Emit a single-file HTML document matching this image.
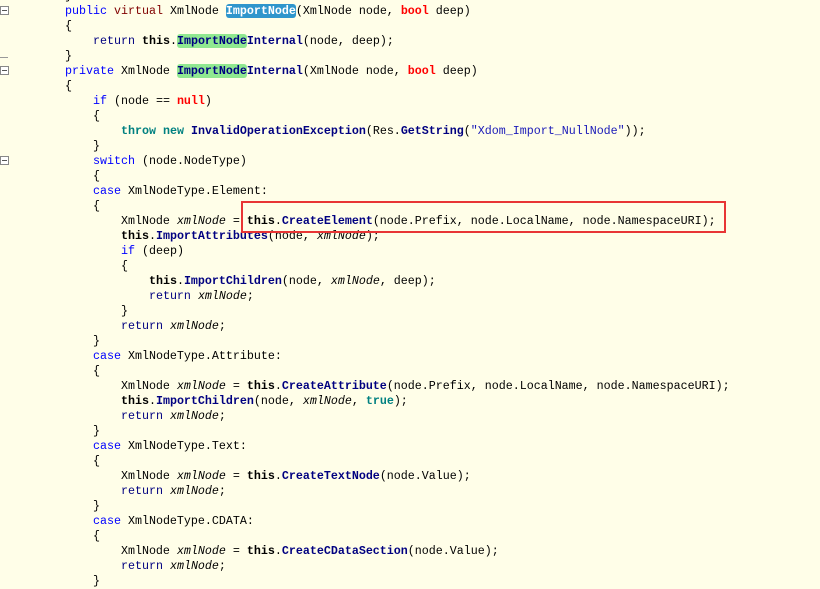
<!DOCTYPE html>
<html><head><meta charset="utf-8"><style>
html,body{margin:0;padding:0}
body{width:820px;height:582px;overflow:hidden;background:#fffee8;position:relative;font-family:"Liberation Mono","DejaVu Sans Mono",monospace;font-size:11.67px;color:#000}
#code{position:absolute;left:65px;top:-11.5px;white-space:pre;line-height:15px}
.k{color:#0000ff}.v{color:#800000}.r{color:#ff0000;font-weight:bold}.n{color:#000080}
.t{font-weight:bold}.m{color:#000080;font-weight:bold}.th{color:#008080;font-weight:bold}
.s{color:#1a1ab8}
.hb{background:#2f96cc;color:#fff;border-radius:3px;font-weight:bold}
.hg{background:#90e890;color:#000080;border-radius:3px;font-weight:bold}
.fold{position:absolute;left:0;width:7px;height:7px;border:1px solid #888;background:#fff}
.fold:after{content:"";position:absolute;left:1px;top:3px;width:5px;height:1px;background:#555}
#box{position:absolute;left:241px;top:201px;width:481px;height:28px;border:2px solid #e83535}
</style></head><body>
<div class="fold" style="top:6px"></div>
<div style="position:absolute;left:0;top:57px;width:8px;height:1px;background:#999"></div>
<div class="fold" style="top:66px"></div>
<div class="fold" style="top:156px"></div>
<div id="code">}
<span class="k">public</span> <span class="v">virtual</span> XmlNode <span class="hb">ImportNode</span>(XmlNode node, <span class="r">bool</span> deep)
{
    <span class="n">return</span> <span class="t">this</span>.<span class="hg">ImportNode</span><span class="m">Internal</span>(node, deep);
}
<span class="k">private</span> XmlNode <span class="hg">ImportNode</span><span class="m">Internal</span>(XmlNode node, <span class="r">bool</span> deep)
{
    <span class="k">if</span> (node == <span class="r">null</span>)
    {
        <span class="th">throw</span> <span class="th">new</span> <span class="m">InvalidOperationException</span>(Res.<span class="m">GetString</span>(<span class="s">"Xdom_Import_NullNode"</span>));
    }
    <span class="k">switch</span> (node.NodeType)
    {
    <span class="k">case</span> XmlNodeType.Element:
    {
        XmlNode <i>xmlNode</i> = <span class="t">this</span>.<span class="m">CreateElement</span>(node.Prefix, node.LocalName, node.NamespaceURI);
        <span class="t">this</span>.<span class="m">ImportAttributes</span>(node, <i>xmlNode</i>);
        <span class="k">if</span> (deep)
        {
            <span class="t">this</span>.<span class="m">ImportChildren</span>(node, <i>xmlNode</i>, deep);
            <span class="n">return</span> <i>xmlNode</i>;
        }
        <span class="n">return</span> <i>xmlNode</i>;
    }
    <span class="k">case</span> XmlNodeType.Attribute:
    {
        XmlNode <i>xmlNode</i> = <span class="t">this</span>.<span class="m">CreateAttribute</span>(node.Prefix, node.LocalName, node.NamespaceURI);
        <span class="t">this</span>.<span class="m">ImportChildren</span>(node, <i>xmlNode</i>, <span class="th">true</span>);
        <span class="n">return</span> <i>xmlNode</i>;
    }
    <span class="k">case</span> XmlNodeType.Text:
    {
        XmlNode <i>xmlNode</i> = <span class="t">this</span>.<span class="m">CreateTextNode</span>(node.Value);
        <span class="n">return</span> <i>xmlNode</i>;
    }
    <span class="k">case</span> XmlNodeType.CDATA:
    {
        XmlNode <i>xmlNode</i> = <span class="t">this</span>.<span class="m">CreateCDataSection</span>(node.Value);
        <span class="n">return</span> <i>xmlNode</i>;
    }
</div>
<div id="box"></div>
</body></html>
